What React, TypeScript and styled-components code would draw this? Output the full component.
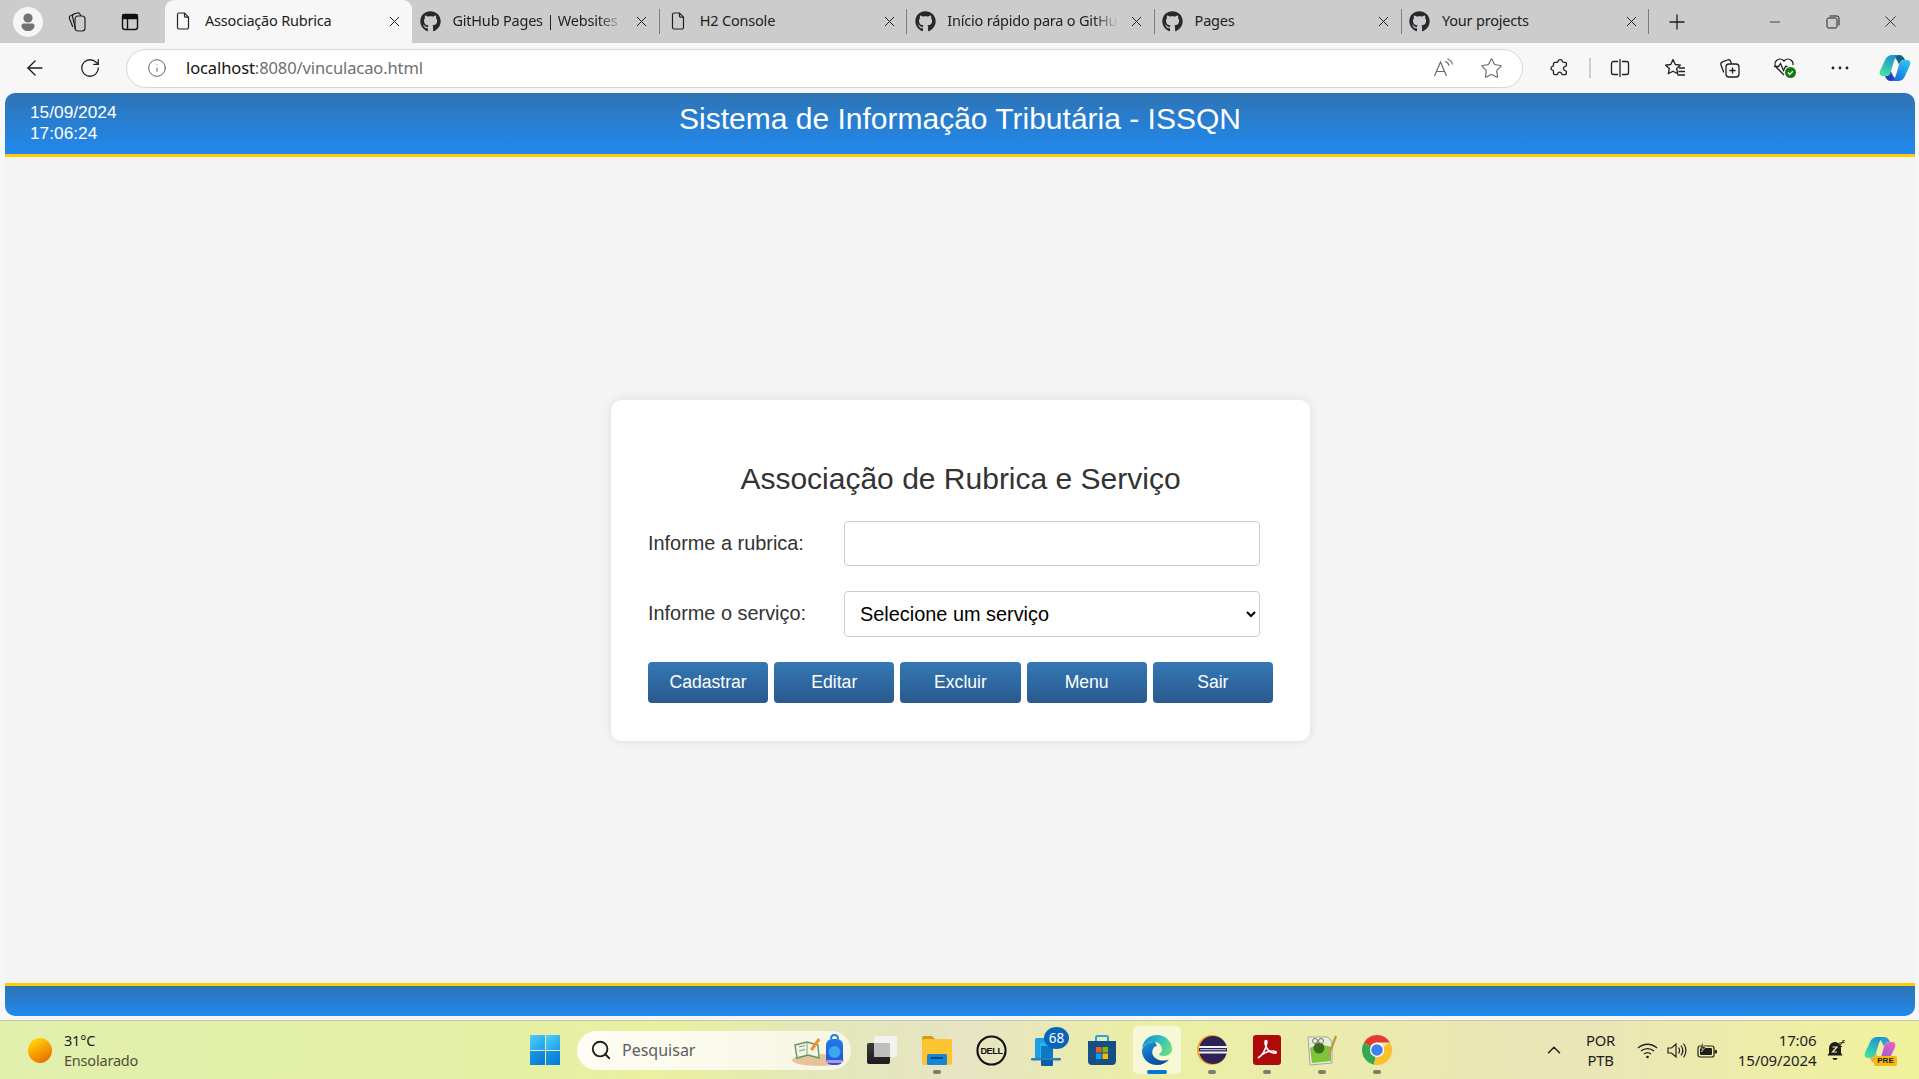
import React from 'react';
import styled, { createGlobalStyle } from 'styled-components';
import { FaGithub } from 'react-icons/fa';
import { ArrowLeft, RotateCw, Info, Star, X, Plus, Minus, ChevronUp, Search } from 'lucide-react';

const GlobalStyle = createGlobalStyle`
  html, body {
    margin: 0;
    padding: 0;
    height: 100%;
    overflow: hidden;
    background: #f7f7f7;
  }
  * { box-sizing: border-box; }
`;

const Screen = styled.div`
  width: 1919px;
  height: 1079px;
  display: flex;
  flex-direction: column;
  font-family: 'Noto Sans', 'Liberation Sans', sans-serif;
`;

/* browser chrome */
const TabStrip = styled.div`
  height: 43px;
  flex: none;
  display: flex;
  background: #cccccc;
`;

const StripTools = styled.div`
  width: 165px;
  flex: none;
  display: flex;
  align-items: center;
  padding-left: 13px;
`;

const ProfileBadge = styled.div`
  width: 30px;
  height: 30px;
  flex: none;
  border-radius: 50%;
  background: #f6f6f6;
  display: flex;
  align-items: center;
  justify-content: center;
  margin-right: 7px;
`;

const StripButton = styled.div`
  width: 53px;
  height: 43px;
  flex: none;
  display: flex;
  align-items: center;
  justify-content: center;
  color: #1b1b1b;
`;

const Tab = styled.div<{ $active?: boolean; $divider?: boolean }>`
  position: relative;
  width: 247.4px;
  flex: none;
  height: 43px;
  display: flex;
  align-items: center;
  padding: 0 9px 1px 7px;
  background: ${(p) => (p.$active ? '#f7f7f7' : 'transparent')};
  border-radius: ${(p) => (p.$active ? '9px 9px 0 0' : '0')};
  color: #222;
  &::after {
    content: '';
    display: ${(p) => (p.$divider ? 'block' : 'none')};
    position: absolute;
    right: 0;
    top: 9px;
    height: 25px;
    width: 1px;
    background: #7d7d7d;
  }
`;

const TabIcon = styled.span`
  width: 22px;
  height: 22px;
  flex: none;
  display: flex;
  align-items: center;
  justify-content: center;
  color: #24292e;
`;

const TabTitle = styled.span<{ $fade?: boolean }>`
  flex: 1;
  margin-left: 11px;
  padding-bottom: 2px;
  font-size: 14.5px;
  letter-spacing: -0.2px;
  white-space: nowrap;
  overflow: hidden;
  ${(p) => (p.$fade ? 'mask-image: linear-gradient(to right, #000 0, #000 146px, transparent 172px);' : '')}
`;

const TabClose = styled.span`
  width: 18px;
  flex: none;
  display: flex;
  justify-content: center;
  margin-left: 4px;
  color: #1d1d1d;
`;

const NewTab = styled.div`
  width: 56px;
  display: flex;
  align-items: center;
  justify-content: center;
  color: #1d1d1d;
`;

const WindowControls = styled.div`
  margin-left: auto;
  display: flex;
  align-items: center;
`;

const WindowButton = styled.div`
  width: 57.5px;
  height: 43px;
  display: flex;
  align-items: center;
  justify-content: center;
  color: #222;
`;

const Toolbar = styled.div`
  height: 50px;
  flex: none;
  display: flex;
  align-items: center;
  padding-left: 7px;
  background: #f7f7f7;
`;

const NavButton = styled.div`
  width: 55px;
  flex: none;
  display: flex;
  justify-content: center;
  color: #1f1f1f;
`;

const AddressBar = styled.div`
  width: 1397px;
  height: 39px;
  flex: none;
  margin-left: 9px;
  display: flex;
  align-items: center;
  background: #fff;
  border: 1.5px solid #d6d6d6;
  border-radius: 20px;
  padding: 0 19px 0 20px;
`;

const Url = styled.div`
  margin-left: 19px;
  padding-bottom: 2px;
  font-size: 16.5px;
  letter-spacing: -0.1px;
  color: #6f6f6f;
  b {
    font-weight: 400;
    color: #111;
  }
`;

const AddressActions = styled.div`
  margin-left: auto;
  display: flex;
  align-items: center;
  gap: 25px;
  color: #6a6a6a;
`;

const ToolGroup = styled.div`
  display: flex;
  align-items: center;
  margin-left: 9px;
  color: #1f1f1f;
`;

const ToolButton = styled.div`
  width: 55px;
  flex: none;
  display: flex;
  justify-content: center;
  position: relative;
`;

const ToolDivider = styled.div`
  width: 2px;
  height: 20px;
  flex: none;
  background: #cfcfcf;
  margin: 0 1.5px 0 2px;
`;

/* page */
const Page = styled.div`
  flex: 1;
  min-height: 0;
  display: flex;
  flex-direction: column;
  padding: 0 4px 4px 5px;
  font-family: 'Liberation Sans', Arial, sans-serif;
`;

const PageHeader = styled.header`
  height: 64px;
  flex: none;
  position: relative;
  display: flex;
  justify-content: center;
  background: linear-gradient(to bottom, #2e74b5, #2189ee);
  border-bottom: 3px solid #ffcc00;
  border-radius: 10px 10px 0 0;
  color: #fff;
`;

const Clock = styled.div`
  position: absolute;
  left: 25px;
  top: 9px;
  font-size: 17.3px;
  line-height: 21px;
`;

const PageTitle = styled.h1`
  margin: 8px 0 0;
  font-size: 30px;
  line-height: 35px;
  font-weight: 400;
`;

const Main = styled.main`
  flex: 1;
  min-height: 0;
  display: flex;
  align-items: center;
  justify-content: center;
  background: #f4f4f4;
`;

const Card = styled.form`
  width: 699px;
  height: 341px;
  margin-left: 1px;
  padding: 60px 37px 0;
  background: #fff;
  border-radius: 10px;
  box-shadow: 0 0 10px rgba(0, 0, 0, 0.1);
`;

const CardTitle = styled.h2`
  margin: 0 0 23px;
  text-align: center;
  font-size: 30px;
  line-height: 38px;
  font-weight: 400;
  color: #333;
`;

const FieldRow = styled.div`
  width: 612px;
  display: flex;
  align-items: center;
  margin-bottom: 25px;
`;

const FieldLabel = styled.label`
  width: 196px;
  flex: none;
  font-size: 19.9px;
  color: #333;
`;

const TextField = styled.input`
  width: 416px;
  height: 45px;
  border: 1px solid #ccc;
  border-radius: 4px;
  background: #fff;
  outline: none;
`;

const SelectField = styled.select`
  width: 416px;
  height: 46px;
  padding: 0 11px;
  border: 1px solid #ccc;
  border-radius: 4px;
  background: #fff;
  font-family: 'Liberation Sans', Arial, sans-serif;
  font-size: 19.9px;
  color: #000;
`;

const ButtonRow = styled.div`
  display: flex;
  gap: 6px;
`;

const ActionButton = styled.button`
  width: 120.2px;
  height: 41px;
  padding: 0;
  border: none;
  border-radius: 4px;
  background: linear-gradient(to bottom, #3577b5, #285a8d);
  color: #fff;
  font-family: 'Liberation Sans', Arial, sans-serif;
  font-size: 17.6px;
`;

const PageFooter = styled.footer`
  height: 33px;
  flex: none;
  background: linear-gradient(to bottom, #2e74b5, #2189ee);
  border-top: 3px solid #ffcc00;
  border-radius: 0 0 10px 10px;
`;

/* windows taskbar */
const Taskbar = styled.div`
  height: 59px;
  flex: none;
  display: flex;
  align-items: center;
  border-top: 1px solid #c6c6a8;
  background: linear-gradient(
    to right,
    #e1f0ad 0%,
    #e5f0a6 28%,
    #e9f09e 34%,
    #e3e8b8 42%,
    #e6e4c4 50%,
    #ebefa4 60%,
    #e9e6b8 82%,
    #f1f29c 100%
  );
`;

const Weather = styled.div`
  width: 530px;
  flex: none;
  display: flex;
  align-items: center;
  padding-left: 28px;
`;

const Sun = styled.div`
  width: 24px;
  height: 25px;
  border-radius: 50%;
  background: linear-gradient(150deg, #ffcb05 20%, #e96a00 90%);
`;

const WeatherText = styled.div`
  margin-left: 12px;
  padding-bottom: 1px;
  font-size: 14.5px;
  line-height: 20px;
  letter-spacing: -0.2px;
  color: #1d1d1d;
  span {
    display: block;
    color: #4f4f3a;
  }
`;

const StartButton = styled.div`
  width: 30px;
  height: 30px;
  flex: none;
  display: grid;
  grid-template-columns: 1fr 1fr;
  gap: 1px;
  margin-right: 17px;
`;

const StartPane = styled.div<{ $light?: boolean }>`
  background: ${(p) =>
    p.$light ? 'linear-gradient(135deg, #52cdfb, #1a9fe8)' : 'linear-gradient(135deg, #1a9ae4, #0578d4)'};
`;

const SearchBox = styled.div`
  width: 274px;
  height: 39px;
  flex: none;
  display: flex;
  align-items: center;
  padding: 0 5px 0 13px;
  border-radius: 20px;
  background: linear-gradient(to right, #fdfdf5, #f7f6e2);
  color: #1c1c1c;
`;

const SearchText = styled.span`
  flex: 1;
  margin-left: 10px;
  font-size: 16px;
  color: #5d5d5d;
`;

const AppStrip = styled.div`
  display: flex;
  align-items: center;
  margin-left: 3px;
`;

const AppSlot = styled.div<{ $current?: boolean }>`
  position: relative;
  width: ${(p) => (p.$current ? 48 : 55)}px;
  margin: 0 ${(p) => (p.$current ? 3.5 : 0)}px;
  height: 48px;
  flex: none;
  display: flex;
  align-items: center;
  justify-content: center;
  border-radius: 5px;
  background: ${(p) => (p.$current ? 'rgba(255,255,255,0.55)' : 'transparent')};
`;

const RunningDot = styled.span<{ $current?: boolean }>`
  position: absolute;
  bottom: 0;
  left: 50%;
  transform: translateX(-50%);
  width: ${(p) => (p.$current ? 20 : 8)}px;
  height: 4px;
  border-radius: 2px;
  background: ${(p) => (p.$current ? '#0078d4' : '#7d7d6a')};
`;

const Badge = styled.span`
  position: absolute;
  top: 1px;
  right: 5px;
  width: 25px;
  height: 22px;
  border-radius: 50%;
  background: #0a64b8;
  color: #fff;
  font-size: 13.5px;
  line-height: 22px;
  text-align: center;
`;

const Tray = styled.div`
  margin-left: auto;
  display: flex;
  align-items: center;
  color: #1e1e1e;
`;

const TrayChevron = styled.div`
  width: 30px;
  display: flex;
  justify-content: center;
`;

const Lang = styled.div`
  width: 36px;
  margin-left: 14px;
  margin-right: 14px;
  text-align: center;
  font-size: 14.8px;
  line-height: 20px;
  letter-spacing: -0.2px;
`;

const TrayIcon = styled.div`
  width: 30px;
  display: flex;
  justify-content: center;
`;

const TrayClock = styled.div`
  width: 94px;
  text-align: right;
  font-size: 15px;
  line-height: 20px;
  letter-spacing: -0.1px;
  margin-right: 10px;
`;

const TrayEnd = styled.div`
  display: flex;
  align-items: center;
  gap: 19.5px;
  padding-right: 23px;
`;

/* drawings */
const PageGlyph = () => (
  <svg width="20" height="20" viewBox="0 0 20 20" fill="none" stroke="#222" strokeWidth="1.2">
    <path d="M4.5 3.5a1.5 1.5 0 0 1 1.5-1.5h5.5l4 4.2v10.3a1.5 1.5 0 0 1-1.5 1.5H6a1.5 1.5 0 0 1-1.5-1.5z" />
    <path d="M11.5 2v3a1.2 1.2 0 0 0 1.2 1.2h2.8" />
  </svg>
);

const PersonGlyph = () => (
  <svg width="22" height="22" viewBox="0 0 22 22" fill="#737373">
    <circle cx="11" cy="7" r="4.6" />
    <path d="M4.5 14.5a2 2 0 0 1 2-2h9a2 2 0 0 1 2 2c0 3.5-3 5.5-6.5 5.5s-6.5-2-6.5-5.5z" />
  </svg>
);

const CollectionsTabsGlyph = () => (
  <svg width="20" height="22" viewBox="0 0 20 22" fill="none" stroke="#222" strokeWidth="1.2">
    <rect x="8" y="5" width="10" height="15" rx="3" />
    <path d="M8.5 18 5.5 5.8a2.5 2.5 0 0 1 1.8-3l3-.8a2.5 2.5 0 0 1 3 1.8l.4 1.2" />
    <path d="M5.8 16 2.5 7.5a2 2 0 0 1 1-2.7l2-.8" />
  </svg>
);

const VerticalTabsGlyph = () => (
  <svg width="20" height="20" viewBox="0 0 20 20" fill="none" stroke="#111" strokeWidth="1.4">
    <rect x="2.5" y="2.5" width="15" height="15" rx="2.5" />
    <path d="M7.5 6.5v11" />
    <path d="M3 3h14v3.5H3z" fill="#111" />
  </svg>
);

const RestoreGlyph = () => (
  <svg width="14" height="14" viewBox="0 0 14 14" fill="none" stroke="#222" strokeWidth="1">
    <rect x="1" y="3" width="10" height="10" rx="1.5" />
    <path d="M3.5 1H11a2 2 0 0 1 2 2v7.5" />
  </svg>
);

const ReadAloudGlyph = () => (
  <svg width="22" height="20" viewBox="0 0 22 20" fill="none" stroke="#6a6a6a" strokeWidth="1.2">
    <path d="M1.5 18 7.5 4l6 14M3.5 13.5h8" />
    <path d="M12 3.5c2 .5 3.5 2 4 4M14.5 1c2.5.8 4.5 2.8 5 5.5" />
  </svg>
);

const PuzzleGlyph = () => (
  <svg width="20" height="20" viewBox="0 0 20 20" fill="none" stroke="#1f1f1f" strokeWidth="1.3" strokeLinejoin="round">
    <path d="M8 3.5a2.3 2.3 0 0 1 4.5 0c.1.6.8.8 1.4.8h1.3a1.2 1.2 0 0 1 1.2 1.2v1.8c0 .6-.6 1-1.2 1.1a2.2 2.2 0 0 0 0 4.3c.6.1 1.2.5 1.2 1.1v.9a2 2 0 0 1-2 2h-1.700c-.6 0-1-.6-1.100-1.100a2 2 0 0 0-3.900 0c-.1.5-.5 1.100-1.100 1.100H5a1.5 1.5 0 0 1-1.500-1.500v-1.900c0-.6-.5-1-1-1.100a2 2 0 0 1 0-3.900c.5-.1 1-.5 1-1.100V5.500A1.500 1.500 0 0 1 5 4.300h1.700c.6 0 1.200-.3 1.300-.8z" />
  </svg>
);

const SplitGlyph = () => (
  <svg width="22" height="20" viewBox="0 0 22 20" fill="none" stroke="#1f1f1f" strokeWidth="1.3">
    <path d="M9 3.5H4.500a2 2 0 0 0-2 2v9a2 2 0 0 0 2 2H9M13 3.500h4.500a2 2 0 0 1 2 2v9a2 2 0 0 1-2 2H13" />
    <path d="M11 1v18" />
  </svg>
);

const FavoritesGlyph = () => (
  <svg width="24" height="22" viewBox="0 0 24 22" fill="none" stroke="#1f1f1f" strokeWidth="1.3" strokeLinejoin="round">
    <path d="M10 2.500 12.300 7.500l5.200.6-3.800 3.500 1 5.200-4.700-2.600-4.700 2.600 1-5.200L2.500 8.100l5.200-.6z" />
    <path d="M16 11h6M15.500 14.500H22M14.500 18H22" />
  </svg>
);

const CollectionsGlyph = () => (
  <svg width="24" height="22" viewBox="0 0 24 22" fill="none" stroke="#1f1f1f" strokeWidth="1.3">
    <rect x="8" y="7" width="13" height="13" rx="3" />
    <path d="M14.500 10.500v6M11.500 13.500h6" />
    <path d="M5.800 15.500 3 8a2.500 2.500 0 0 1 1.500-3.200l5-1.800a2.500 2.500 0 0 1 3.200 1.500l.8 2.200" />
  </svg>
);

const HealthGlyph = () => (
  <svg width="26" height="24" viewBox="0 0 26 24" fill="none">
    <path
      d="M12 19 4.500 11.500a5 5 0 0 1 0-7 5 5 0 0 1 7 0l.5.500.5-.500a5 5 0 0 1 7 0 5 5 0 0 1 1.500 4.500M2 10.500h4.500l2-3 3 7 2-4h2"
      stroke="#1f1f1f"
      strokeWidth="1.3"
    />
    <circle cx="18.500" cy="16.500" r="5.500" fill="#107c10" />
    <path d="m16 16.500 1.800 1.800 3-3" stroke="#fff" strokeWidth="1.300" />
  </svg>
);

const DotsGlyph = () => (
  <svg width="20" height="6" viewBox="0 0 20 6" fill="#1f1f1f">
    <circle cx="3" cy="3" r="1.400" />
    <circle cx="10" cy="3" r="1.400" />
    <circle cx="17" cy="3" r="1.400" />
  </svg>
);

const CopilotGlyph = ({ id, pink }: { id: string; pink?: boolean }) => (
  <svg width="32" height="28" viewBox="0 0 32 28">
    <defs>
      <linearGradient id={`${id}a`} x1="0.7" y1="0" x2="0.2" y2="1">
        <stop offset="0" stopColor="#1a8fd6" />
        <stop offset="1" stopColor="#43e3a0" />
      </linearGradient>
      <linearGradient id={`${id}b`} x1="0.8" y1="0" x2="0.3" y2="1">
        <stop offset="0" stopColor={pink ? '#e95fc0' : '#2fc4f2'} />
        <stop offset="1" stopColor={pink ? '#8a5be0' : '#1470e0'} />
      </linearGradient>
    </defs>
    <path d="M13 1h7c3 0 5 2 6 5h-1c-3 0-4 2-5 5-1-4-3-7-7-10z" fill={pink ? '#2a9fd0' : '#17627f'} />
    <path d="M19 27h-7c-3 0-5-2-6-5h1c3 0 4-2 5-5 1 4 3 7 7 10z" fill={pink ? '#f6a23a' : '#1e3fc0'} />
    <path d="M13 1h7c-3 1-4 3-5 6l-3 10c-1 3-3 5-6 5H4c-2.500 0-4-2-3-5L6 6c1-3 4-5 7-5z" fill={`url(#${id}a)`} />
    <path d="M19 27h-7c3-1 4-3 5-6l3-10c1-3 3-5 6-5h2c2.500 0 4 2 3 5l-5 11c-1 3-4 5-7 5z" fill={`url(#${id}b)`} />
  </svg>
);

const WidgetsArt = () => (
  <svg width="54" height="36" viewBox="0 0 54 36">
    <defs>
      <linearGradient id="bagFill" x1="0" y1="0" x2="0" y2="1">
        <stop offset="0" stopColor="#1f7be8" />
        <stop offset="1" stopColor="#2a4fd8" />
      </linearGradient>
    </defs>
    <ellipse cx="26" cy="28" rx="26" ry="6" fill="#e6c39a" />
    <path d="M3 13 15 10l11 3 1 13-11-3-11 3z" fill="#f2f4e4" stroke="#5e9a5e" strokeWidth="1.4" />
    <path d="M15 10v13" stroke="#7ca87c" />
    <path d="M7 15l6-1.500M7 19l6-1.500" stroke="#8a8a8a" />
    <path d="M18 17 26 6l2.500 2-8 11z" fill="#ee9336" />
    <rect x="34" y="7" width="17" height="26" rx="6" fill="url(#bagFill)" />
    <path d="M39 7c0-5.500 7-5.500 7 0" stroke="#1f7be8" strokeWidth="2" fill="none" />
    <circle cx="42.500" cy="20" r="6" fill="#3ba6f2" />
    <rect x="35" y="28" width="15" height="3" fill="#a99ae8" />
  </svg>
);

const TaskViewGlyph = () => (
  <svg width="32" height="32" viewBox="0 0 32 32">
    <defs>
      <linearGradient id="taskDark" x1="0" y1="0" x2="0" y2="1">
        <stop offset="0" stopColor="#3a3a3a" />
        <stop offset="1" stopColor="#1c1c1c" />
      </linearGradient>
    </defs>
    <rect x="1" y="9" width="23" height="21" rx="2" fill="url(#taskDark)" />
    <rect x="8" y="2" width="23" height="21" rx="2" fill="#f2f2ee" />
    <rect x="8" y="9" width="16" height="14" fill="#bfbfbb" />
  </svg>
);

const ExplorerGlyph = () => (
  <svg width="32" height="30" viewBox="0 0 32 30">
    <path d="M1 3a2 2 0 0 1 2-2h8l3 3 3 2H1z" fill="#d79b12" />
    <rect x="1" y="4" width="30" height="26" rx="2" fill="#fcc430" />
    <rect x="6" y="19" width="20" height="11" rx="1.500" fill="#1585d6" />
    <rect x="10" y="22" width="12" height="2" fill="#07457f" />
  </svg>
);

const DellGlyph = () => (
  <svg width="31" height="31" viewBox="0 0 32 32">
    <circle cx="16" cy="16" r="14.5" fill="none" stroke="#111" strokeWidth="2.2" />
    <text x="16" y="19.5" textAnchor="middle" fontFamily="Liberation Sans" fontWeight="700" fontSize="9.500" letterSpacing="-0.5" fill="#111">
      DELL
    </text>
  </svg>
);

const TodoGlyph = () => (
  <svg width="32" height="32" viewBox="0 0 32 32">
    <path d="M4 6a2 2 0 0 1 2-2h14v20H4z" fill="#1c9fe2" />
    <path d="M9 9h11v15H9z" fill="#2fb2ea" />
    <path d="M10 12h12v14H10z" fill="#0c78c8" />
    <rect x="0" y="24" width="30" height="2.500" rx="1" fill="#2a7fb8" />
    <rect x="10" y="26" width="12" height="6" rx="1" fill="#0a5fa8" />
  </svg>
);

const StoreGlyph = () => (
  <svg width="30" height="32" viewBox="0 0 30 32">
    <path d="M9 7V3.500A1.500 1.500 0 0 1 10.500 2h9A1.500 1.500 0 0 1 21 3.500V7" fill="none" stroke="#22a5e8" strokeWidth="2" />
    <path d="M1 7h28v20a4 4 0 0 1-4 4H5a4 4 0 0 1-4-4z" fill="#164f86" />
    <rect x="9" y="13" width="5.500" height="5.500" fill="#ef5a29" />
    <rect x="15.500" y="13" width="5.500" height="5.500" fill="#7fba00" />
    <rect x="9" y="19.500" width="5.500" height="5.500" fill="#00a4ef" />
    <rect x="15.500" y="19.500" width="5.500" height="5.500" fill="#ffb900" />
  </svg>
);

const EdgeGlyph = () => (
  <svg width="32" height="32" viewBox="0 0 32 32">
    <defs>
      <linearGradient id="edgeTop" x1="0" y1="0.300" x2="1" y2="0.700">
        <stop offset="0" stopColor="#1a8fd4" />
        <stop offset="0.500" stopColor="#2fbfc0" />
        <stop offset="1" stopColor="#6fe07a" />
      </linearGradient>
      <linearGradient id="edgeLow" x1="0" y1="0" x2="0.700" y2="1">
        <stop offset="0" stopColor="#1f9be0" />
        <stop offset="0.600" stopColor="#0c62b4" />
        <stop offset="1" stopColor="#0a4f94" />
      </linearGradient>
    </defs>
    <path d="M1 15C2 6 8 1 16 1c9 0 15 7 15 14 0 4-3 7-8 7-3 0-5-1-5-2 2-1 3-3 3-4 0-5-3-8-8-8C6 8 1 13 1 15z" fill="url(#edgeTop)" />
    <path d="M13 8C7 8 1 12 1 17c0 8 7 14 15 14 5 0 9-2 12-6-3 2-9 2-12 0-4-2-6-6-4-10 .8-2 2-3 4-3-1-2-1.500-4-3-4z" fill="url(#edgeLow)" />
  </svg>
);

const EclipseGlyph = () => (
  <svg width="32" height="32" viewBox="0 0 32 32">
    <circle cx="16" cy="16" r="15" fill="#f6a21e" />
    <circle cx="17" cy="16" r="14" fill="#2c2255" />
    <path d="M3 13h28M3 18.500h28" stroke="#f4f4f4" strokeWidth="2" />
    <path d="M4 15.700h26" stroke="#cfcfe6" strokeWidth="1" />
  </svg>
);

const AcrobatGlyph = () => (
  <svg width="30" height="32" viewBox="0 0 30 32">
    <rect x="1" y="1" width="28" height="30" rx="3" fill="#ae0a0a" />
    <path d="M6 24c4-2 8-8 9-16 0-2-2-2-2 0 0 6 5 12 11 11 1-1-1-2-3-2-5 0-10 2-15 7z" fill="none" stroke="#fff" strokeWidth="1.600" />
  </svg>
);

const NotepadGlyph = () => (
  <svg width="32" height="34" viewBox="0 0 32 34">
    <path d="M2 4h20l4 5v21L4 32z" fill="#e8ecd8" stroke="#a8a898" />
    <path d="M4 15c6-3 15-3 21-1v14L6 30z" fill="#7fc53a" />
    <circle cx="13" cy="15" r="5.500" fill="#3d6b22" />
    <path d="M22 24 30 3" stroke="#c09a4a" strokeWidth="2.400" />
    <circle cx="9" cy="8" r="2.500" fill="none" stroke="#777" />
    <circle cx="15" cy="8" r="2.500" fill="none" stroke="#777" />
  </svg>
);

const ChromeGlyph = () => (
  <svg width="32" height="32" viewBox="0 0 32 32">
    <path d="M16 16 3 8.500A15 15 0 0 0 13 30.700z" fill="#34a853" />
    <path d="M16 16 29 8.500A15 15 0 0 1 13 30.700z" fill="#fbc02d" />
    <path d="M3 8.500a15 15 0 0 1 26 0H16a7.500 7.500 0 0 0-6.500 3.750z" fill="#e53a2f" />
    <circle cx="16" cy="16" r="7.200" fill="#fff" />
    <circle cx="16" cy="16" r="5.800" fill="#3b82ee" />
  </svg>
);

const WifiGlyph = () => (
  <svg width="21" height="17" viewBox="0 0 21 17" fill="none" stroke="#1e1e1e" strokeWidth="1.300">
    <path d="M1 6c5.500-5 13.500-5 19 0M4 9c3.800-3.300 9.200-3.300 13 0M7 12c2.200-1.700 4.800-1.700 7 0" />
    <circle cx="10.500" cy="15" r="1.300" fill="#1e1e1e" stroke="none" />
  </svg>
);

const SpeakerGlyph = () => (
  <svg width="21" height="17" viewBox="0 0 21 17" fill="none" stroke="#1e1e1e" strokeWidth="1.200">
    <path d="M1 6h3.500L9 2v13l-4.500-4H1z" />
    <path d="M11.500 5.500c1.300 1.800 1.300 4.200 0 6M14 3.500c2.200 3 2.200 7 0 10M16.500 1.500c3.200 4 3.200 10 0 14" />
  </svg>
);

const BatteryGlyph = () => (
  <svg width="21" height="17" viewBox="0 0 21 17">
    <rect x="1" y="4" width="16" height="11" rx="2" fill="#ecf0a0" stroke="#1e1e1e" strokeWidth="1.200" />
    <rect x="3" y="6" width="12" height="7" rx="1" fill="#1e1e1e" />
    <rect x="17.500" y="8" width="2.500" height="3.500" rx="1" fill="#1e1e1e" />
    <path d="M6 0 3 6h3L4.500 10 9 4.500H6z" fill="#1e1e1e" stroke="#ecf0a0" strokeWidth=".6" />
  </svg>
);

const SnoozeBellGlyph = () => (
  <svg width="18" height="20" viewBox="0 0 18 20">
    <path d="M8 2a6 6 0 0 0-6 6v5l-1.500 2.500h15L14 13V8a6 6 0 0 0-6-6z" fill="#1e1e1e" />
    <path d="M5.500 18a2.500 2 0 0 0 5 0z" fill="#1e1e1e" />
    <path d="M5.500 7h4.500l-4.500 5h4.500" stroke="#ecf0a0" strokeWidth="1.200" fill="none" />
    <path d="M12 3h3l-3 3.500h3M15 0h2.500L15 2.500h2.500" stroke="#1e1e1e" fill="none" />
  </svg>
);

const PreLabel = styled.span`
  position: absolute;
  right: -1px;
  bottom: -2px;
  width: 23px;
  height: 10px;
  border-radius: 2px;
  background: #f5b90f;
  color: #1c1c1c;
  font-family: 'Liberation Sans', sans-serif;
  font-size: 8px;
  line-height: 10px;
  font-weight: 700;
  text-align: center;
`;

const PreviewLogo = styled.div`
  position: relative;
  display: flex;
`;

const tabs = [
  { title: 'Associação Rubrica', icon: 'page', active: true },
  { title: 'GitHub Pages | Websites f', icon: 'git', divider: true, fade: true },
  { title: 'H2 Console', icon: 'page', divider: true },
  { title: 'Início rápido para o GitHu', icon: 'git', divider: true, fade: true },
  { title: 'Pages', icon: 'git', divider: true },
  { title: 'Your projects', icon: 'git', divider: true },
];

const apps = [
  { key: 'task', node: <TaskViewGlyph /> },
  { key: 'files', node: <ExplorerGlyph />, running: true },
  { key: 'dell', node: <DellGlyph /> },
  { key: 'todo', node: <TodoGlyph />, badge: '68' },
  { key: 'store', node: <StoreGlyph /> },
  { key: 'edge', node: <EdgeGlyph />, running: true, current: true },
  { key: 'eclipse', node: <EclipseGlyph />, running: true },
  { key: 'acrobat', node: <AcrobatGlyph />, running: true },
  { key: 'notepad', node: <NotepadGlyph />, running: true },
  { key: 'chrome', node: <ChromeGlyph />, running: true },
];

const actions = ['Cadastrar', 'Editar', 'Excluir', 'Menu', 'Sair'];

const App: React.FC = () => {
  return (
    <Screen>
      <GlobalStyle />
      <TabStrip>
        <StripTools>
          <ProfileBadge>
            <PersonGlyph />
          </ProfileBadge>
          <StripButton>
            <CollectionsTabsGlyph />
          </StripButton>
          <StripButton>
            <VerticalTabsGlyph />
          </StripButton>
        </StripTools>
        {tabs.map((tab) => (
          <Tab key={tab.title} $active={tab.active} $divider={tab.divider}>
            <TabIcon>{tab.icon === 'git' ? <FaGithub size={21} /> : <PageGlyph />}</TabIcon>
            <TabTitle $fade={tab.fade}>{tab.title}</TabTitle>
            <TabClose>
              <X size={17} strokeWidth={1.4} />
            </TabClose>
          </Tab>
        ))}
        <NewTab>
          <Plus size={24} strokeWidth={1.3} />
        </NewTab>
        <WindowControls>
          <WindowButton>
            <Minus size={16} strokeWidth={1.2} />
          </WindowButton>
          <WindowButton>
            <RestoreGlyph />
          </WindowButton>
          <WindowButton>
            <X size={19} strokeWidth={1.1} />
          </WindowButton>
        </WindowControls>
      </TabStrip>

      <Toolbar>
        <NavButton>
          <ArrowLeft size={24} strokeWidth={1.4} />
        </NavButton>
        <NavButton>
          <RotateCw size={22} strokeWidth={1.4} />
        </NavButton>
        <AddressBar>
          <Info size={20} strokeWidth={1.1} color="#555" />
          <Url>
            <b>localhost</b>:8080/vinculacao.html
          </Url>
          <AddressActions>
            <ReadAloudGlyph />
            <Star size={23} strokeWidth={1.2} />
          </AddressActions>
        </AddressBar>
        <ToolGroup>
          <ToolButton>
            <PuzzleGlyph />
          </ToolButton>
          <ToolDivider />
          <ToolButton>
            <SplitGlyph />
          </ToolButton>
          <ToolButton>
            <FavoritesGlyph />
          </ToolButton>
          <ToolButton>
            <CollectionsGlyph />
          </ToolButton>
          <ToolButton>
            <HealthGlyph />
          </ToolButton>
          <ToolButton>
            <DotsGlyph />
          </ToolButton>
          <ToolButton>
            <CopilotGlyph id="edgeCopilot" />
          </ToolButton>
        </ToolGroup>
      </Toolbar>

      <Page>
        <PageHeader>
          <Clock>
            15/09/2024
            <br />
            17:06:24
          </Clock>
          <PageTitle>Sistema de Informação Tributária - ISSQN</PageTitle>
        </PageHeader>
        <Main>
          <Card>
            <CardTitle>Associação de Rubrica e Serviço</CardTitle>
            <FieldRow>
              <FieldLabel htmlFor="rubrica">Informe a rubrica:</FieldLabel>
              <TextField id="rubrica" type="text" />
            </FieldRow>
            <FieldRow>
              <FieldLabel htmlFor="servico">Informe o serviço:</FieldLabel>
              <SelectField id="servico" defaultValue="">
                <option value="">Selecione um serviço</option>
              </SelectField>
            </FieldRow>
            <ButtonRow>
              {actions.map((action) => (
                <ActionButton key={action} type="button">
                  {action}
                </ActionButton>
              ))}
            </ButtonRow>
          </Card>
        </Main>
        <PageFooter />
      </Page>

      <Taskbar>
        <Weather>
          <Sun />
          <WeatherText>
            31°C
            <span>Ensolarado</span>
          </WeatherText>
        </Weather>
        <StartButton>
          <StartPane $light />
          <StartPane $light />
          <StartPane />
          <StartPane />
        </StartButton>
        <SearchBox>
          <Search size={22} strokeWidth={2} />
          <SearchText>Pesquisar</SearchText>
          <WidgetsArt />
        </SearchBox>
        <AppStrip>
          {apps.map((app) => (
            <AppSlot key={app.key} $current={app.current}>
              {app.node}
              {app.badge && <Badge>{app.badge}</Badge>}
              {app.running && <RunningDot $current={app.current} />}
            </AppSlot>
          ))}
        </AppStrip>
        <Tray>
          <TrayChevron>
            <ChevronUp size={22} strokeWidth={1.6} />
          </TrayChevron>
          <Lang>
            POR
            <br />
            PTB
          </Lang>
          <TrayIcon>
            <WifiGlyph />
          </TrayIcon>
          <TrayIcon>
            <SpeakerGlyph />
          </TrayIcon>
          <TrayIcon>
            <BatteryGlyph />
          </TrayIcon>
          <TrayClock>
            17:06
            <br />
            15/09/2024
          </TrayClock>
          <TrayEnd>
            <SnoozeBellGlyph />
            <PreviewLogo>
              <CopilotGlyph id="winCopilot" pink />
              <PreLabel>PRE</PreLabel>
            </PreviewLogo>
          </TrayEnd>
        </Tray>
      </Taskbar>
    </Screen>
  );
};

export default App;
